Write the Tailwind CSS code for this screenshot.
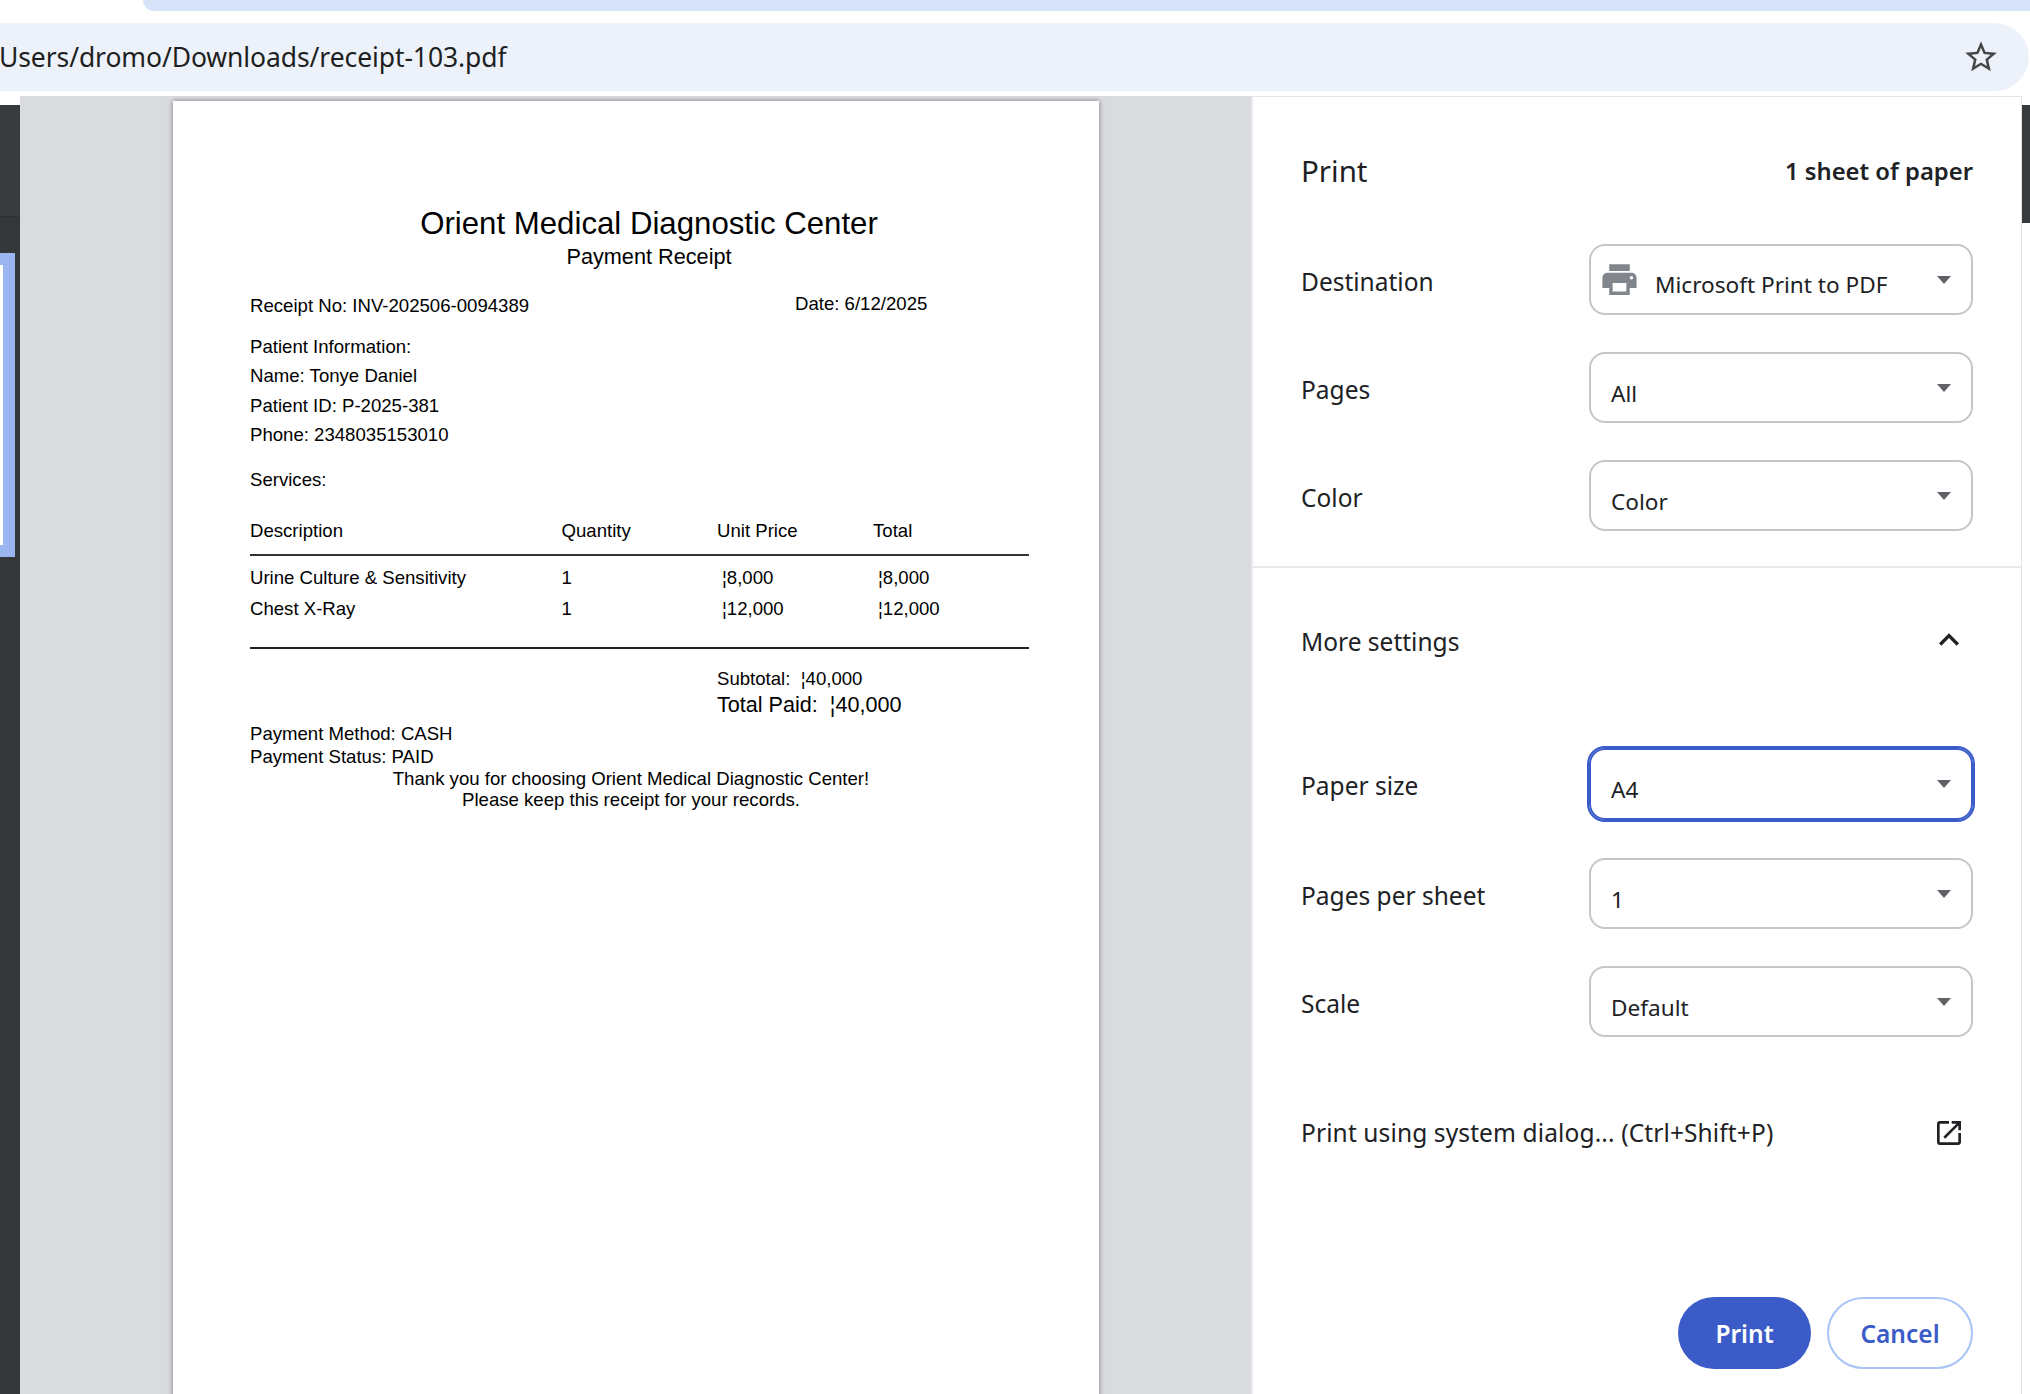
<!DOCTYPE html>
<html lang="en">
<head>
    <meta charset="UTF-8">
    <title>Print - receipt-103.pdf</title>
    <script src="https://cdn.jsdelivr.net/npm/@tailwindcss/browser@4"></script>
</head>
<body class="bg-white w-[2030px] h-[1394px] overflow-hidden font-['Noto_Sans',sans-serif] text-[#202124]">

    <!-- Browser chrome -->
    <div class="h-[23px]">
        <div class="ml-[143px] h-[11px] bg-[#d7e3f9] rounded-bl-[14px]"></div>
    </div>
    <div class="w-[2029px] h-[68px] bg-[#edf2fa] rounded-r-[34px] flex items-center justify-between pr-[29px]">
        <span class="text-[26.5px] text-[#1f1f1f] -ml-[1px] mt-[2px] tracking-[-0.1px]">Users/dromo/Downloads/receipt-103.pdf</span>
        <svg class="w-[38px] h-[38px] fill-[#474747]" viewBox="0 0 24 24"><path d="M22 9.24l-7.19-.62L12 2 9.19 8.63 2 9.24l5.46 4.73L5.82 21 12 17.27 18.18 21l-1.63-7.03L22 9.24zM12 15.4l-3.76 2.27 1-4.28-3.32-2.88 4.38-.38L12 6.1l1.71 4.04 4.38.38-3.32 2.88 1 4.28L12 15.4z"/></svg>
    </div>

    <div class="mt-[5px] flex h-[1298px] overflow-hidden">
        <!-- Page behind the dialog, left edge -->
        <div class="w-[20px] shrink-0 pt-[9px]">
            <div class="h-full bg-[#33373a]">
                <div class="h-[112px] bg-[#373b3e] border-b border-[#2e3134]"></div>
                <div class="mt-[36px] w-[15px] h-[304px] bg-[#9ab5f0] pt-[12px]">
                    <div class="w-[3px] h-[280px] bg-white"></div>
                </div>
            </div>
        </div>

        <!-- Preview -->
        <div class="w-[1231px] shrink-0 bg-[#dadbdf] pt-[5px] pl-[153px] overflow-hidden">
            <div class="w-[926px] h-[1400px] bg-white shadow-[0_0_5px_#77777c] pl-[77px] pr-[70px] pt-[105px] font-['Liberation_Sans',sans-serif] text-[18.6px] text-black">
                <div class="pl-[19px] text-center">
                    <h1 class="text-[31.2px] leading-[36px]">Orient Medical Diagnostic Center</h1>
                    <p class="text-[21.7px] leading-[26px] mt-[2px]">Payment Receipt</p>
                </div>
                <div class="mt-[24px] flex leading-[24px]">
                    <span class="w-[545px]">Receipt No: INV-202506-0094389</span>
                    <span class="-mt-[2px]">Date: 6/12/2025</span>
                </div>
                <div class="mt-[14px] leading-[29.4px]">
                    <p>Patient Information:</p>
                    <p>Name: Tonye Daniel</p>
                    <p>Patient ID: P-2025-381</p>
                    <p>Phone: 2348035153010</p>
                </div>
                <p class="mt-[15px] leading-[29px]">Services:</p>

                <!-- Services table -->
                <div class="mt-[25px] grid grid-cols-[311.5px_155.5px_156px_1fr] leading-[24px] border-b-2 border-[#333] pb-[11px]">
                    <span>Description</span><span>Quantity</span><span>Unit Price</span><span>Total</span>
                </div>
                <div class="mt-[6px] grid grid-cols-[311.5px_155.5px_156px_1fr] leading-[31px] border-b-2 border-[#222] pb-[23px]">
                    <span>Urine Culture &amp; Sensitivity</span><span>1</span><span class="pl-[5px]">¦8,000</span><span class="pl-[5px]">¦8,000</span>
                    <span>Chest X-Ray</span><span>1</span><span class="pl-[5px]">¦12,000</span><span class="pl-[5px]">¦12,000</span>
                </div>

                <div class="mt-[18px] pl-[467px]">
                    <p class="leading-[24px]">Subtotal:&nbsp; ¦40,000</p>
                    <p class="text-[21.6px] leading-[27px]">Total Paid:&nbsp; ¦40,000</p>
                </div>
                <div class="mt-[4px] leading-[23px]">
                    <p>Payment Method: CASH</p>
                    <p>Payment Status: PAID</p>
                </div>
                <div class="pr-[17px] text-center leading-[21px]">
                    <p>Thank you for choosing Orient Medical Diagnostic Center!</p>
                    <p>Please keep this receipt for your records.</p>
                </div>
            </div>
        </div>

        <!-- Print settings -->
        <div class="w-[771px] shrink-0 bg-white border-l-2 border-l-[#e8e8ee] border-t border-t-[#e4e4e4] border-r border-r-[#e4e4e4] flex flex-col text-[24.5px]">
            <div class="h-[147px] pl-[48px] pr-[48px] pt-[54px] flex justify-between items-start">
                <span class="text-[29.5px] leading-[40px]">Print</span>
                <span class="font-semibold text-[23.8px] leading-[36px] mt-[2px]">1 sheet of paper</span>
            </div>

            <div class="pl-[48px] flex flex-col gap-[37px]">
                <div class="flex items-center">
                    <span class="w-[288px] mt-[5px]">Destination</span>
                    <div class="w-[384px] h-[71px] border-2 border-[#c6c6c6] rounded-[16px] flex items-center justify-between pl-[8px] pr-[20px]">
                        <div class="flex items-center">
                            <svg class="w-[41px] h-[41px] fill-[#80868b]" viewBox="0 0 24 24"><path d="M19 8H5c-1.66 0-3 1.34-3 3v6h4v4h12v-4h4v-6c0-1.66-1.34-3-3-3zm-3 11H8v-5h8v5zm3-7c-.55 0-1-.45-1-1s.45-1 1-1 1 .45 1 1-.45 1-1 1zm-1-9H6v4h12V3z"/></svg>
                            <span class="ml-[15px] pt-[11px] text-[22.6px]">Microsoft Print to PDF</span>
                        </div>
                        <span class="w-0 h-0 border-x-[7px] border-x-transparent border-t-[8px] border-t-[#5f6368]"></span>
                    </div>
                </div>
                <div class="flex items-center">
                    <span class="w-[288px] mt-[5px]">Pages</span>
                    <div class="w-[384px] h-[71px] border-2 border-[#c6c6c6] rounded-[16px] flex items-center justify-between pl-[20px] pr-[20px]">
                        <span class="pt-[12px] text-[22.6px]">All</span>
                        <span class="w-0 h-0 border-x-[7px] border-x-transparent border-t-[8px] border-t-[#5f6368]"></span>
                    </div>
                </div>
                <div class="flex items-center">
                    <span class="w-[288px] mt-[5px]">Color</span>
                    <div class="w-[384px] h-[71px] border-2 border-[#c6c6c6] rounded-[16px] flex items-center justify-between pl-[20px] pr-[20px]">
                        <span class="pt-[12px] text-[22.6px]">Color</span>
                        <span class="w-0 h-0 border-x-[7px] border-x-transparent border-t-[8px] border-t-[#5f6368]"></span>
                    </div>
                </div>
            </div>

            <div class="mt-[35px] h-[2px] bg-[#e8e8ee]"></div>

            <div class="h-[180px] pl-[48px] pr-[52px] pt-[56px] flex justify-between items-start">
                <span class="leading-[36px]">More settings</span>
                <svg class="w-[40px] h-[40px] -mt-[4px] fill-[#202124]" viewBox="0 0 24 24"><path d="M12 8l-6 6 1.41 1.41L12 10.83l4.59 4.58L18 14z"/></svg>
            </div>

            <div class="pl-[48px] flex flex-col gap-[37px]">
                <div class="flex items-center">
                    <span class="w-[288px] mt-[5px]">Paper size</span>
                    <div class="w-[384px] h-[72px] border-2 border-[#3a5cc8] ring-2 ring-[#3a5cc8] rounded-[16px] flex items-center justify-between pl-[20px] pr-[20px]">
                        <span class="pt-[12px] text-[22.6px]">A4</span>
                        <span class="w-0 h-0 border-x-[7px] border-x-transparent border-t-[8px] border-t-[#5f6368]"></span>
                    </div>
                </div>
                <div class="mt-[1px] flex items-center">
                    <span class="w-[288px] mt-[5px]">Pages per sheet</span>
                    <div class="w-[384px] h-[71px] border-2 border-[#c6c6c6] rounded-[16px] flex items-center justify-between pl-[20px] pr-[20px]">
                        <span class="pt-[12px] text-[22.6px]">1</span>
                        <span class="w-0 h-0 border-x-[7px] border-x-transparent border-t-[8px] border-t-[#5f6368]"></span>
                    </div>
                </div>
                <div class="flex items-center">
                    <span class="w-[288px] mt-[5px]">Scale</span>
                    <div class="w-[384px] h-[71px] border-2 border-[#c6c6c6] rounded-[16px] flex items-center justify-between pl-[20px] pr-[20px]">
                        <span class="pt-[12px] text-[22.6px]">Default</span>
                        <span class="w-0 h-0 border-x-[7px] border-x-transparent border-t-[8px] border-t-[#5f6368]"></span>
                    </div>
                </div>
            </div>

            <div class="mt-[78px] pl-[48px] pr-[56px] flex justify-between items-center">
                <span class="tracking-[0.12px]">Print using system dialog... (Ctrl+Shift+P)</span>
                <svg class="w-[32px] h-[32px] -mt-[1px] fill-[#202124]" viewBox="0 0 24 24"><path d="M19 19H5V5h7V3H5c-1.11 0-2 .9-2 2v14c0 1.1.89 2 2 2h14c1.1 0 2-.9 2-2v-7h-2v7zM14 3v2h3.59l-9.83 9.83 1.41 1.41L19 6.41V10h2V3h-7z"/></svg>
            </div>

            <div class="mt-[145px] pr-[48px] flex justify-end gap-[16px]">
                <button class="w-[133px] h-[72px] rounded-full bg-[#3b5cc8] text-white font-semibold pt-[4px]">Print</button>
                <button class="w-[146px] h-[72px] rounded-full border-2 border-[#a8c4f5] text-[#3b5cc8] font-semibold pt-[4px]">Cancel</button>
            </div>
        </div>

        <!-- Page behind the dialog, right edge -->
        <div class="w-[8px] shrink-0 pt-[9px]">
            <div class="h-[118px] bg-[#373b3e]"></div>
        </div>
    </div>

</body>
</html>
